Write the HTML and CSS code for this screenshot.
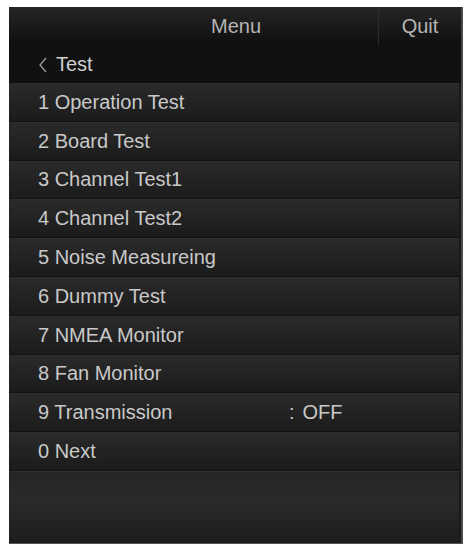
FILE: index.html
```html
<!DOCTYPE html>
<html>
<head>
<meta charset="utf-8">
<link rel="stylesheet" href="styles.css">
</head>
<body>
<div class="panel">
  <div class="header">
    <div class="title">Menu</div>
    <div class="quit">Quit</div>
  </div>
  <div class="crumb">
    <svg class="chev" width="10" height="16" viewBox="0 0 10 16"><polyline points="8,1 2,8 8,15" fill="none" stroke="#9a9a9a" stroke-width="1.3"/></svg>
    <span>Test</span>
  </div>
  <div class="list">
    <div class="row"><span class="label">1 Operation Test</span></div>
    <div class="row"><span class="label">2 Board Test</span></div>
    <div class="row"><span class="label">3 Channel Test1</span></div>
    <div class="row"><span class="label">4 Channel Test2</span></div>
    <div class="row"><span class="label">5 Noise Measureing</span></div>
    <div class="row"><span class="label">6 Dummy Test</span></div>
    <div class="row"><span class="label">7 NMEA Monitor</span></div>
    <div class="row"><span class="label">8 Fan Monitor</span></div>
    <div class="row"><span class="label">9 Transmission</span><span class="value"><span class="colon">:</span>OFF</span></div>
    <div class="row"><span class="label">0 Next</span></div>
  </div>
  <div class="filler"></div>
</div>
</body>
</html>
```
FILE: styles.css
```css
html, body {
  margin: 0;
  padding: 0;
  background: #ffffff;
}
body {
  font-family: "Liberation Sans", Arial, sans-serif;
}
.panel {
  margin: 7px 0 0 9px;
  width: 454px;
  height: 537px;
  box-sizing: border-box;
  border-right: 2px solid #4a4a4a;
  border-bottom: 1px solid #555;
  background: #1a1a1a;
  display: flex;
  flex-direction: column;
}
.header {
  height: 38px;
  display: flex;
  background: linear-gradient(#252525, #0f0f0f);
}
.title {
  flex: 1;
  display: flex;
  align-items: center;
  justify-content: center;
  padding-left: 85px;
  font-size: 20px;
  color: #b4b4b4;
}
.quit {
  width: 82px;
  border-left: 1px solid #2c2c2c;
  display: flex;
  align-items: center;
  justify-content: center;
  font-size: 20px;
  color: #b4b4b4;
}
.crumb {
  height: 38px;
  display: flex;
  align-items: center;
  padding-left: 29px;
  background: #111111;
  color: #d0d0d0;
  font-size: 20px;
}
.chev {
  margin-right: 8px;
  margin-top: 1px;
}
.list {
  display: flex;
  flex-direction: column;
}
.row {
  height: 38.8px;
  box-sizing: border-box;
  display: flex;
  align-items: center;
  padding-left: 29px;
  margin-right: 2px;
  border-top: 1px solid #2d2d2d;
  border-bottom: 1px solid #121212;
  background: linear-gradient(#2a2a2a, #1b1b1b);
  font-size: 20px;
  color: #c9c9c9;
}
.label {
  width: 251px;
}
.colon {
  margin-right: 8px;
}
.filler {
  flex: 1;
  margin-right: 2px;
  border-top: 1px solid #2e2e2e;
  background: linear-gradient(#252525, #2a2a2a 40%, #1d1d1d);
}
```
